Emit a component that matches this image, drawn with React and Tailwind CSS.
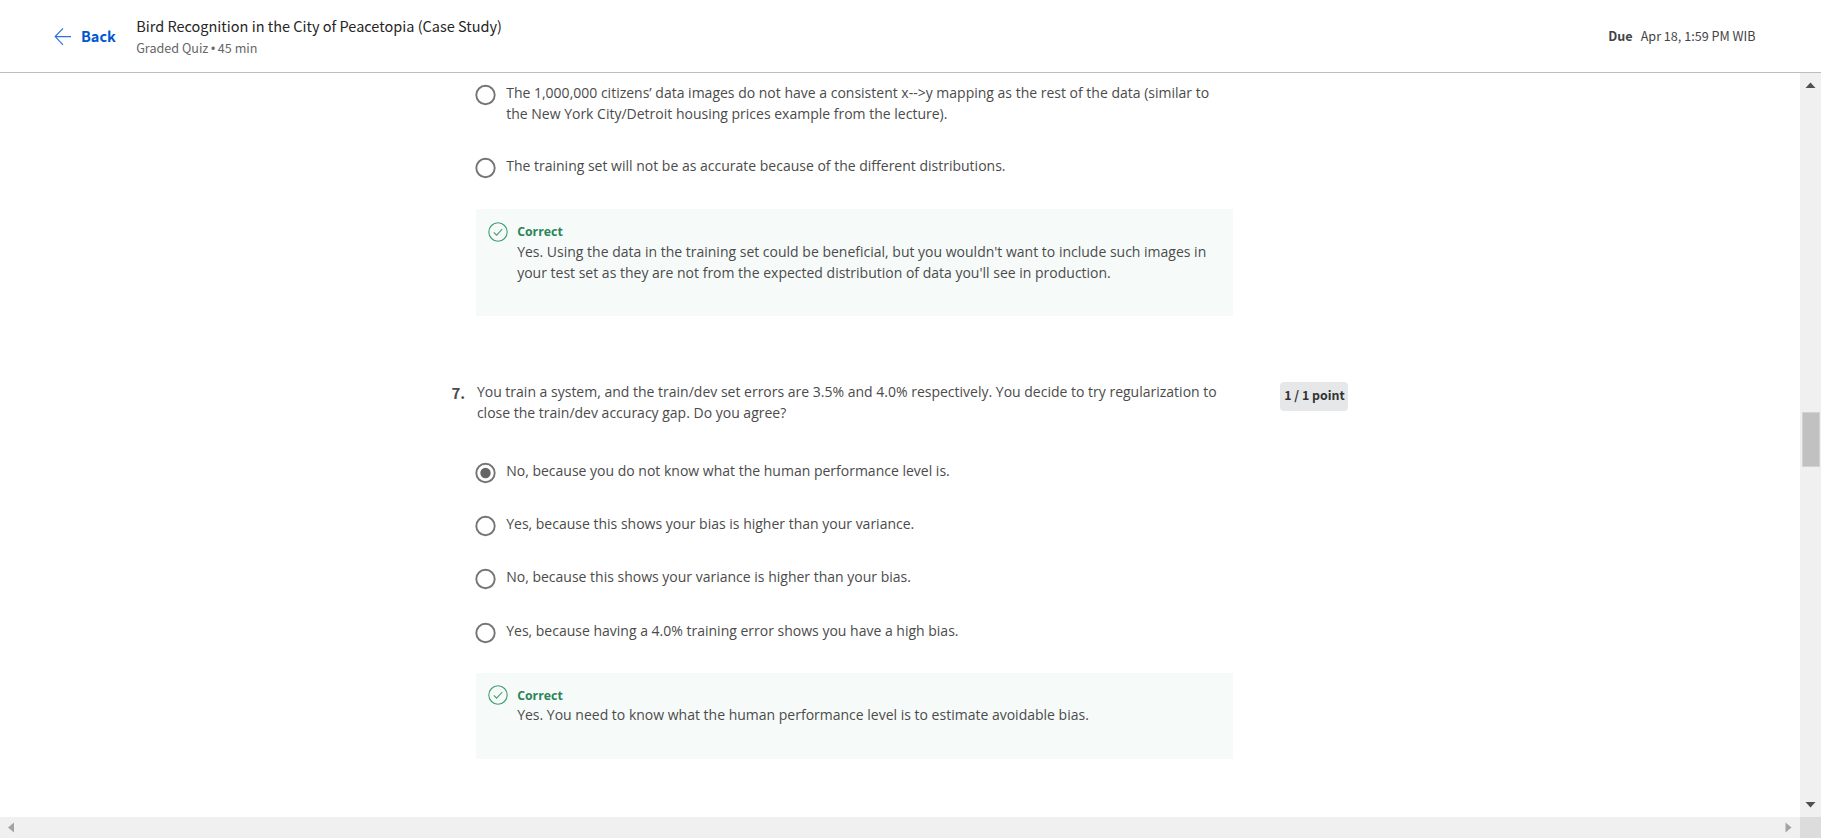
import React from 'react';

function Radio({ checked }) {
  return (
    <svg className="block h-[22px] w-[22px] shrink-0" viewBox="0 0 22 22">
      <circle cx="10.5" cy="11" r="9.2" fill="none" stroke="#757575" strokeWidth="1.9" />
      {checked && <circle cx="10.5" cy="11" r="5.2" fill="#666" />}
    </svg>
  );
}

function Option({ lines, checked, className }) {
  return (
    <label className={`flex items-start ${className}`}>
      <span className="pt-[2px]">
        <Radio checked={checked} />
      </span>
      <span className="ml-[9.5px] block">
        {lines.map((text) => (
          <span key={text} className="block whitespace-nowrap">{text}</span>
        ))}
      </span>
    </label>
  );
}

function Feedback({ lines, className }) {
  return (
    <div className={`flex w-[757px] bg-[#f6fbfa] pl-[12px] ${className}`}>
      <svg className="mt-[12.4px] block h-[20px] w-[20px] shrink-0" viewBox="0 0 20 20" fill="none" stroke="#3f9d70" strokeWidth="1.1">
        <circle cx="10" cy="10" r="9.2" />
        <path d="M5.8 10.4l2.8 2.8 5.7-6.2" />
      </svg>
      <div className="ml-[8.8px] pt-[13px]">
        <div className="text-[12.3px] font-bold leading-[20px] text-[#2a8558]">Correct</div>
        <div className="-mt-[1.4px]">
          {lines.map((text) => (
            <div key={text} className="whitespace-nowrap">{text}</div>
          ))}
        </div>
      </div>
    </div>
  );
}

export default function App() {
  return (
    <div className="flex h-[838px] w-[1821px] flex-col overflow-hidden bg-white font-['Open_Sans',sans-serif] text-[#4b4b4b]">
      <header className="flex h-[73px] shrink-0 items-start border-b border-[#bdbdbd] font-['Noto_Sans_CJK_SC',sans-serif]">
        <svg className="ml-[53.5px] mt-[27px] block h-[19px] w-[18px]" viewBox="0 0 18 19" fill="none" stroke="#2a73e0" strokeWidth="1.2">
          <path d="M17 9.6H1.5M9 1.3L1.2 9.6 9 17.8" />
        </svg>
        <span className="ml-[9.5px] mt-[24px] w-[34px] text-[14.5px] font-bold leading-[24px] text-[#0056d2]">Back</span>
        <div className="ml-[21.2px] mt-[14px]">
          <div className="whitespace-nowrap text-[14.5px] leading-[24px] text-[#262626]">Bird Recognition in the City of Peacetopia (Case Study)</div>
          <div className="mt-[0.4px] flex whitespace-nowrap text-[12.6px] leading-[20px] text-[#666]">
            <span>Graded Quiz</span>
            <span className="w-[9.5px] text-center font-['Open_Sans',sans-serif] text-[15px]">•</span>
            <span>45 min</span>
          </div>
        </div>
        <div className="ml-auto mr-[65.5px] mt-[26.4px] flex gap-[8px] text-[12.6px] leading-[20px] text-[#444]">
          <span className="font-bold">Due</span>
          <span>Apr 18, 1:59 PM WIB</span>
        </div>
      </header>

      <div className="flex min-h-0 flex-1">
        <main className="flex min-w-0 flex-1 flex-col pl-[451.4px] text-[14px] leading-[21.33px]">
          <div className="pl-[23.3px]">
            <Option
              className="mt-[9px]"
              lines={[
                'The 1,000,000 citizens’ data images do not have a consistent x-->y mapping as the rest of the data (similar to',
                'the New York City/Detroit housing prices example from the lecture).',
              ]}
            />
            <Option className="mt-[30.7px]" lines={['The training set will not be as accurate because of the different distributions.']} />
            <Feedback
              className="ml-[1.7px] mt-[30px] h-[107px]"
              lines={[
                "Yes. Using the data in the training set could be beneficial, but you wouldn't want to include such images in",
                "your test set as they are not from the expected distribution of data you'll see in production.",
              ]}
            />
          </div>

          <section className="mt-[64.7px] flex items-start">
            <span className="w-[25.5px] pt-[1px] font-['Noto_Sans_CJK_SC',sans-serif] text-[15px] font-bold">7.</span>
            <div className="w-[803.6px]">
              <p className="whitespace-nowrap">You train a system, and the train/dev set errors are 3.5% and 4.0% respectively. You decide to try regularization to</p>
              <p className="whitespace-nowrap">close the train/dev accuracy gap. Do you agree?</p>
            </div>
            <span className="mt-[0.6px] flex h-[29px] w-[68px] items-center justify-center rounded-[4px] bg-[#e5e7e8] font-['Noto_Sans_CJK_SC',sans-serif] text-[12.4px] font-bold text-[#333]">1 / 1 point</span>
          </section>

          <div className="pl-[23.3px] pt-[36px]">
            <Option checked className="" lines={['No, because you do not know what the human performance level is.']} />
            <Option className="mt-[29.3px]" lines={['Yes, because this shows your bias is higher than your variance.']} />
            <Option className="mt-[29.3px]" lines={['No, because this shows your variance is higher than your bias.']} />
            <Option className="mt-[29.3px]" lines={['Yes, because having a 4.0% training error shows you have a high bias.']} />
            <Feedback
              className="ml-[1.7px] mt-[29px] h-[86px]"
              lines={['Yes. You need to know what the human performance level is to estimate avoidable bias.']}
            />
          </div>
        </main>
        <div className="flex w-[21px] flex-col items-center bg-[#f0f0f0]">
          <svg className="mt-[9px] block h-[7px] w-[11px]" viewBox="0 0 11 7"><path d="M5.5 0.5L10.5 6H0.5z" fill="#505050" /></svg>
          <div className="mt-[323px] h-[55px] w-[18px] border border-[#d2d2d2] bg-[#c1c1c1]" />
          <svg className="mb-[9px] mt-auto block h-[7px] w-[11px]" viewBox="0 0 11 7"><path d="M5.5 6.5L10.5 1H0.5z" fill="#505050" /></svg>
        </div>
      </div>

      <div className="flex h-[21px] shrink-0 items-center bg-[#f0f0f0]">
        <svg className="ml-[8px] block h-[11px] w-[7px]" viewBox="0 0 7 11"><path d="M0 5.5L6 0.5v10z" fill="#a3a3a3" /></svg>
        <svg className="ml-auto mr-[8px] block h-[11px] w-[7px]" viewBox="0 0 7 11"><path d="M6.5 5.5L0.5 0.5v10z" fill="#a3a3a3" /></svg>
        <div className="h-full w-[21px] bg-[#dcdcdc]" />
      </div>
    </div>
  );
}
